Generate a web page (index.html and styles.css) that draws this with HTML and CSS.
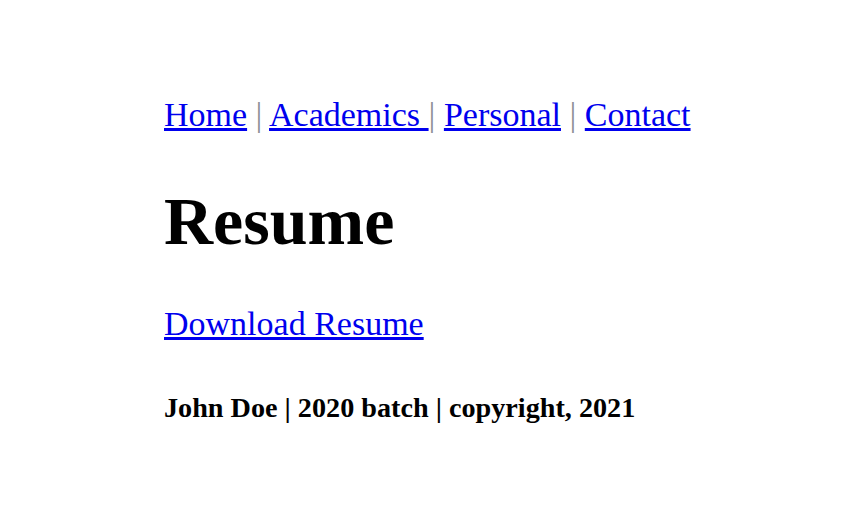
FILE: index.html
```html
<!DOCTYPE html>
<html>
<head>
<meta charset="utf-8">
<link rel="stylesheet" href="styles.css">
</head>
<body>
<div class="page">
  <p class="nav"><a href="#">Home</a> <span class="sep">|</span> <a href="#">Academics </a><span class="sep">|</span> <a href="#">Personal</a> <span class="sep">|</span> <a href="#">Contact</a></p>
  <h1 class="title">Resume</h1>
  <p class="download"><a href="#">Download Resume</a></p>
  <h5 class="footer">John Doe | 2020 batch | copyright, 2021</h5>
</div>
</body>
</html>
```
FILE: styles.css
```css
html, body {
  margin: 0;
  padding: 0;
  background: #fff;
}
body {
  font-family: "Liberation Serif", "Times New Roman", serif;
  color: #000;
}
.page {
  padding: 62px 0 0 164px;
  font-size: 34px;
}
.nav {
  margin: 34px 0;
}
.nav a, .download a {
  color: #0000ee;
}
.sep {
  color: #909096;
}
.title {
  font-size: 68px;
  margin: 47.6px 0 44.6px;
}
.download {
  margin: 34px 0;
}
.footer {
  font-size: 28.2px;
  margin: 48.8px 0;
}
```
